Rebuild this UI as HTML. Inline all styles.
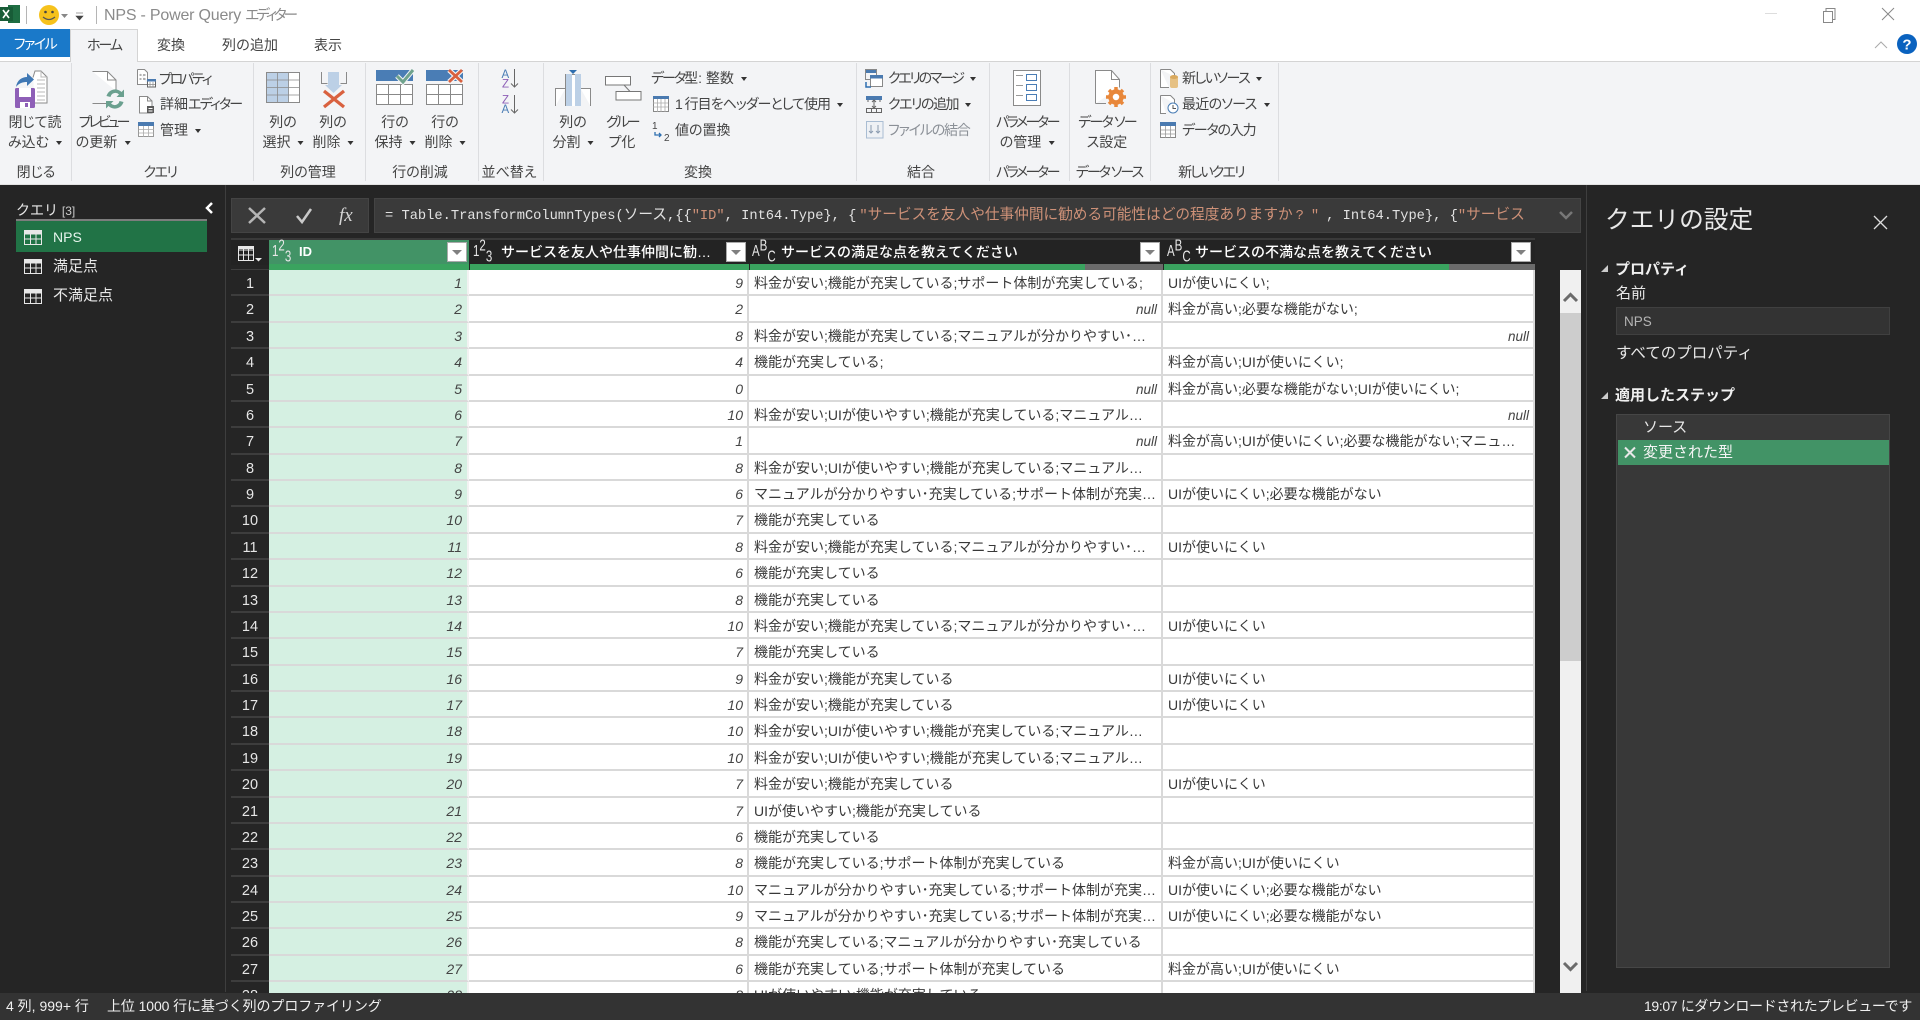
<!DOCTYPE html>
<html lang="ja"><head><meta charset="utf-8"><title>NPS - Power Query エディター</title>
<style>
*{box-sizing:border-box;margin:0;padding:0}
html,body{width:1920px;height:1020px;overflow:hidden;background:#252525}
body{position:relative;font-family:"Liberation Sans","Noto Sans CJK JP",sans-serif;font-size:14px;color:#333}
.b{position:absolute}
.t{position:absolute;white-space:nowrap;line-height:20px;height:20px}
.c{transform:translateX(-50%)}
.a{display:inline-block;width:0;height:0;border-left:3.5px solid transparent;border-right:3.5px solid transparent;border-top:4px solid #333;margin-left:7px;vertical-align:2px;letter-spacing:0}
.g{color:#444;font-size:14px;font-feature-settings:"palt"}
.p{font-feature-settings:"palt"}
.w{color:#e8e8e8}
.sep{position:absolute;top:63px;width:1px;height:118px;background:#dcdde0}
svg{position:absolute;left:0;top:0;overflow:visible}
#grid{position:absolute;left:231px;top:270px;width:1304px;height:723px;overflow:hidden;background:#fff}
.r{position:relative;height:26.38px}
.r span{position:absolute;top:0;height:100%;line-height:27px;white-space:nowrap;overflow:hidden;border-bottom:2px solid #d9d9d9}
.r span:nth-child(1){left:0;width:38px;background:#252525;color:#e6e6e6;text-align:center;font-size:14.5px;line-height:28px;border-bottom:2px solid #3d3d3d}
.r span:nth-child(2){left:38px;width:200px;background:#d5f0e2;text-align:right;font-style:italic;padding-right:5px;color:#444;border-right:2px solid #f2f2f2;font-size:14px}
.r span:nth-child(3){left:238px;width:280px;text-align:right;font-style:italic;padding-right:4px;color:#444;border-right:2px solid #d9d9d9}
.r span:nth-child(4){left:518px;width:414px;padding-left:5px;border-right:2px solid #d9d9d9;color:#383838}
.r span:nth-child(5){left:932px;width:372px;padding-left:5px;color:#383838;border-right:2px solid #d9d9d9}
.r span.nl{text-align:right;font-style:italic;padding-right:4px;color:#444;font-size:13.5px}
#fx{position:absolute;left:385px;top:206px;width:1140px;height:20px;overflow:hidden;white-space:nowrap;font-family:"Liberation Mono","Noto Sans CJK JP",monospace;font-size:13.72px;line-height:20px;color:#e2e2e2}
#fx b{font-weight:400;color:#ce9178;font-size:14.67px}
#fx i{font-style:normal;font-size:14.67px}
#fx em{font-style:normal;color:#ce9178}
#fx em.q{letter-spacing:7px;margin-left:3px}
.h{position:absolute;top:242px;white-space:nowrap;line-height:20px;color:#fff;font-weight:700;font-size:14px}
.fb{position:absolute;top:242px;width:20px;height:20px;background:#fff;border:1px solid #aaa}
.fb:after{content:"";position:absolute;left:4px;top:7px;border-left:5px solid transparent;border-right:5px solid transparent;border-top:5px solid #808080}
.ty{position:absolute;top:240px;height:24px;color:#e8e8e8;line-height:24px;white-space:nowrap;font-size:11.5px;transform:scaleY(1.35);transform-origin:50% 50%}
.ty sup,.ty sub{font-size:11.5px;line-height:0;position:relative;vertical-align:baseline}
.ty sup{top:-4px}.ty sub{top:4px}
</style></head><body>

<!-- title bar + tabs -->
<div class="b" style="left:0;top:0;width:1920px;height:61px;background:#fff"></div>
<div class="b" style="left:0;top:61px;width:1920px;height:124px;background:#f3f4f6;border-top:1px solid #d4d4d4;border-bottom:1px solid #e2e2e2"></div>
<div class="b" style="left:0;top:29px;width:70px;height:28px;background:#1a79c9"></div>
<div class="b" style="left:70px;top:29px;width:68px;height:33px;background:#f3f4f6;border:1px solid #d4d4d4;border-bottom:none"></div>
<div class="t c p" style="left:35px;top:34px;color:#fff;font-size:14px;letter-spacing:-1.5px">ファイル</div>
<div class="t c p" style="left:104px;top:35px;font-size:14px;color:#444;letter-spacing:-2px">ホーム</div>
<div class="t c" style="left:171px;top:35px;font-size:14px;color:#444">変換</div>
<div class="t c" style="left:250px;top:35px;font-size:14px;color:#444">列の追加</div>
<div class="t c" style="left:328px;top:35px;font-size:14px;color:#444">表示</div>
<div class="t p" style="left:104px;top:6px;font-size:16px;color:#8a8a8a;letter-spacing:-.2px">NPS - Power Query <span style="font-size:14.5px;letter-spacing:-3px">エディター</span></div>

<!-- separators -->
<div class="sep" style="left:71px"></div><div class="sep" style="left:253px"></div><div class="sep" style="left:365px"></div><div class="sep" style="left:478px"></div><div class="sep" style="left:543px"></div><div class="sep" style="left:856px"></div><div class="sep" style="left:989px"></div><div class="sep" style="left:1069px"></div><div class="sep" style="left:1150px"></div><div class="sep" style="left:1278px"></div>

<!-- ribbon large button labels -->
<div class="t c g" style="left:35px;top:112px">閉じて読</div><div class="t c g" style="left:35px;top:132px">み込む<i class="a"></i></div>
<div class="t c g" style="left:103px;top:112px;letter-spacing:-3px">プレビュー</div><div class="t c g" style="left:103px;top:132px">の更新<i class="a"></i></div>
<div class="t c g" style="left:283px;top:112px">列の</div><div class="t c g" style="left:283px;top:132px">選択<i class="a"></i></div>
<div class="t c g" style="left:333px;top:112px">列の</div><div class="t c g" style="left:333px;top:132px">削除<i class="a"></i></div>
<div class="t c g" style="left:395px;top:112px">行の</div><div class="t c g" style="left:395px;top:132px">保持<i class="a"></i></div>
<div class="t c g" style="left:445px;top:112px">行の</div><div class="t c g" style="left:445px;top:132px">削除<i class="a"></i></div>
<div class="t c g" style="left:573px;top:112px">列の</div><div class="t c g" style="left:573px;top:132px">分割<i class="a"></i></div>
<div class="t c g" style="left:622px;top:112px;letter-spacing:-2.6px">グルー</div><div class="t c g" style="left:622px;top:132px">プ化</div>
<div class="t c g" style="left:1027px;top:112px;letter-spacing:-2.5px">パラメーター</div><div class="t c g" style="left:1027px;top:132px">の管理<i class="a"></i></div>
<div class="t c g" style="left:1107px;top:112px;letter-spacing:-1.8px">データ ソー</div><div class="t c g" style="left:1107px;top:132px">ス設定</div>

<!-- ribbon small labels -->
<div class="t g" style="left:159px;top:69px;letter-spacing:-2.2px">プロパティ</div>
<div class="t g" style="left:160px;top:94px">詳細<span style="letter-spacing:-1.8px">エディター</span></div>
<div class="t g" style="left:160px;top:120px">管理<i class="a"></i></div>
<div class="t g" style="left:651px;top:68px"><span style="letter-spacing:-2px">データ</span>型: 整数<i class="a"></i></div>
<div class="t g" style="left:675px;top:94px;letter-spacing:-1px">1 行目をヘッダーとして使用<i class="a"></i></div>
<div class="t g" style="left:675px;top:120px">値の置換</div>
<div class="t g" style="left:888px;top:68px;letter-spacing:-2.3px">クエリのマージ<i class="a"></i></div>
<div class="t g" style="left:888px;top:94px;letter-spacing:-1.5px">クエリの追加<i class="a"></i></div>
<div class="t g" style="left:888px;top:120px;color:#8b9097;letter-spacing:-1.2px">ファイルの結合</div>
<div class="t g" style="left:1182px;top:68px;letter-spacing:-1.5px">新しいソース<i class="a"></i></div>
<div class="t g" style="left:1182px;top:94px;letter-spacing:-.7px">最近のソース<i class="a"></i></div>
<div class="t g" style="left:1182px;top:120px;letter-spacing:-1.2px">データの入力</div>

<!-- group labels -->
<div class="t c g" style="left:36px;top:162px">閉じる</div>
<div class="t c g" style="left:160px;top:162px;letter-spacing:-1.5px">クエリ</div>
<div class="t c g" style="left:308px;top:162px">列の管理</div>
<div class="t c g" style="left:420px;top:162px">行の削減</div>
<div class="t c g" style="left:509px;top:162px">並べ替え</div>
<div class="t c g" style="left:698px;top:162px">変換</div>
<div class="t c g" style="left:921px;top:162px">結合</div>
<div class="t c g" style="left:1027px;top:162px;letter-spacing:-2.5px">パラメーター</div>
<div class="t c g" style="left:1109px;top:162px;letter-spacing:-2px">データ ソース</div>
<div class="t c g" style="left:1211px;top:162px;letter-spacing:-1.8px">新しいクエリ</div>

<!-- left panel -->
<div class="b" style="left:225px;top:185px;width:1px;height:807px;background:#3e3e3e"></div>
<div class="t w" style="left:16px;top:200px;font-size:14px">クエリ <span style="font-size:12px;color:#ccc">[3]</span></div>
<div class="b" style="left:16px;top:219px;width:191px;height:2px;background:#7d7d7d"></div>
<div class="b" style="left:16px;top:221px;width:191px;height:31px;background:#217346"></div>
<div class="t" style="left:53px;top:227px;color:#e6f4ec;font-size:14px">NPS</div>
<div class="t w" style="left:53px;top:257px;font-size:15px">満足点</div>
<div class="t w" style="left:53px;top:286px;font-size:15px">不満足点</div>

<!-- formula bar -->
<div class="b" style="left:231px;top:198px;width:138px;height:35px;background:#3a3a3a;border:1px solid #444"></div>
<div class="b" style="left:374px;top:198px;width:1207px;height:35px;background:#3a3a3a;border:1px solid #444"></div>
<div id="fx">= Table.TransformColumnTypes(<i>ソース</i>,{{<em>"ID"</em>, Int64.Type}, {<em style="margin-left:3px">"</em><b>サービスを友人や仕事仲間に勧める可能性はどの程度ありますか</b><em class="q">?"</em>, Int64.Type}, {<em>"</em><b>サービス</b></div>
<div class="t" style="left:339px;top:205px;font-family:'Liberation Serif',serif;font-style:italic;font-size:19px;color:#d6d6d6;line-height:22px">fx</div>

<!-- table header -->
<div class="b" style="left:231px;top:238px;width:1304px;height:27px;background:#232323;border-top:2px solid #3a3a3a"></div>
<div class="b" style="left:269px;top:240px;width:200px;height:24px;background:#429366"></div>
<div class="b" style="left:231px;top:265px;width:38px;height:5px;background:#252525;border-bottom:1px solid #3e3e3e"></div>
<div class="b" style="left:269px;top:264px;width:200px;height:6px;background:#3aa35f"></div>
<div class="b" style="left:470px;top:264px;width:279px;height:6px;background:#3aa35f"></div>
<div class="b" style="left:750px;top:264px;width:335px;height:6px;background:#3aa35f"></div>
<div class="b" style="left:1085px;top:264px;width:78px;height:6px;background:#6b6b6b"></div>
<div class="b" style="left:1164px;top:264px;width:285px;height:6px;background:#3aa35f"></div>
<div class="b" style="left:1449px;top:264px;width:86px;height:6px;background:#6b6b6b"></div>
<div class="ty" style="left:272px">1<sup>2</sup><sub>3</sub></div>
<div class="ty" style="left:473px">1<sup>2</sup><sub>3</sub></div>
<div class="ty" style="left:752px">A<sup>B</sup><sub>C</sub></div>
<div class="ty" style="left:1167px">A<sup>B</sup><sub>C</sub></div>
<div class="h" style="left:299px;font-size:13px">ID</div>
<div class="h" style="left:501px;font-weight:500">サービスを友人や仕事仲間に勧…</div>
<div class="h" style="left:781px;font-weight:500">サービスの満足な点を教えてください</div>
<div class="h" style="left:1195px;font-weight:500">サービスの不満な点を教えてください</div>
<div class="fb" style="left:447px"></div><div class="fb" style="left:726px"></div><div class="fb" style="left:1140px"></div><div class="fb" style="left:1511px"></div>

<!-- grid -->
<div id="grid">
<div class="r"><span>1</span><span>1</span><span>9</span><span>料金が安い;機能が充実している;サポート体制が充実している;</span><span>UIが使いにくい;</span></div>
<div class="r"><span>2</span><span>2</span><span>2</span><span class="nl">null</span><span>料金が高い;必要な機能がない;</span></div>
<div class="r"><span>3</span><span>3</span><span>8</span><span>料金が安い;機能が充実している;マニュアルが分かりやすい･…</span><span class="nl">null</span></div>
<div class="r"><span>4</span><span>4</span><span>4</span><span>機能が充実している;</span><span>料金が高い;UIが使いにくい;</span></div>
<div class="r"><span>5</span><span>5</span><span>0</span><span class="nl">null</span><span>料金が高い;必要な機能がない;UIが使いにくい;</span></div>
<div class="r"><span>6</span><span>6</span><span>10</span><span>料金が安い;UIが使いやすい;機能が充実している;マニュアル…</span><span class="nl">null</span></div>
<div class="r"><span>7</span><span>7</span><span>1</span><span class="nl">null</span><span>料金が高い;UIが使いにくい;必要な機能がない;マニュ…</span></div>
<div class="r"><span>8</span><span>8</span><span>8</span><span>料金が安い;UIが使いやすい;機能が充実している;マニュアル…</span><span></span></div>
<div class="r"><span>9</span><span>9</span><span>6</span><span>マニュアルが分かりやすい･充実している;サポート体制が充実…</span><span>UIが使いにくい;必要な機能がない</span></div>
<div class="r"><span>10</span><span>10</span><span>7</span><span>機能が充実している</span><span></span></div>
<div class="r"><span>11</span><span>11</span><span>8</span><span>料金が安い;機能が充実している;マニュアルが分かりやすい･…</span><span>UIが使いにくい</span></div>
<div class="r"><span>12</span><span>12</span><span>6</span><span>機能が充実している</span><span></span></div>
<div class="r"><span>13</span><span>13</span><span>8</span><span>機能が充実している</span><span></span></div>
<div class="r"><span>14</span><span>14</span><span>10</span><span>料金が安い;機能が充実している;マニュアルが分かりやすい･…</span><span>UIが使いにくい</span></div>
<div class="r"><span>15</span><span>15</span><span>7</span><span>機能が充実している</span><span></span></div>
<div class="r"><span>16</span><span>16</span><span>9</span><span>料金が安い;機能が充実している</span><span>UIが使いにくい</span></div>
<div class="r"><span>17</span><span>17</span><span>10</span><span>料金が安い;機能が充実している</span><span>UIが使いにくい</span></div>
<div class="r"><span>18</span><span>18</span><span>10</span><span>料金が安い;UIが使いやすい;機能が充実している;マニュアル…</span><span></span></div>
<div class="r"><span>19</span><span>19</span><span>10</span><span>料金が安い;UIが使いやすい;機能が充実している;マニュアル…</span><span></span></div>
<div class="r"><span>20</span><span>20</span><span>7</span><span>料金が安い;機能が充実している</span><span>UIが使いにくい</span></div>
<div class="r"><span>21</span><span>21</span><span>7</span><span>UIが使いやすい;機能が充実している</span><span></span></div>
<div class="r"><span>22</span><span>22</span><span>6</span><span>機能が充実している</span><span></span></div>
<div class="r"><span>23</span><span>23</span><span>8</span><span>機能が充実している;サポート体制が充実している</span><span>料金が高い;UIが使いにくい</span></div>
<div class="r"><span>24</span><span>24</span><span>10</span><span>マニュアルが分かりやすい･充実している;サポート体制が充実…</span><span>UIが使いにくい;必要な機能がない</span></div>
<div class="r"><span>25</span><span>25</span><span>9</span><span>マニュアルが分かりやすい･充実している;サポート体制が充実…</span><span>UIが使いにくい;必要な機能がない</span></div>
<div class="r"><span>26</span><span>26</span><span>8</span><span>機能が充実している;マニュアルが分かりやすい･充実している</span><span></span></div>
<div class="r"><span>27</span><span>27</span><span>6</span><span>機能が充実している;サポート体制が充実している</span><span>料金が高い;UIが使いにくい</span></div>
<div class="r"><span>28</span><span>28</span><span>8</span><span>UIが使いやすい;機能が充実している</span><span></span></div>
</div>

<!-- scrollbar -->
<div class="b" style="left:1560px;top:270px;width:21px;height:723px;background:#f0f0f0"></div>
<div class="b" style="left:1560px;top:313px;width:21px;height:348px;background:#cdcdcd"></div>

<!-- right panel -->
<div class="b" style="left:1586px;top:185px;width:1px;height:806px;background:#3e3e3e"></div>
<div class="t" style="left:1605px;top:205px;font-size:24.7px;color:#e8e8e8;line-height:32px;height:32px">クエリの設定</div>
<div class="t" style="left:1615px;top:260px;font-size:15px;font-weight:700;color:#f0f0f0">プロパティ</div>
<div class="t w" style="left:1616px;top:284px;font-size:15px">名前</div>
<div class="b" style="left:1616px;top:307px;width:274px;height:28px;background:#333;border:1px solid #404040"></div>
<div class="t" style="left:1624px;top:312px;color:#b5b5b5;font-size:13.5px">NPS</div>
<div class="t w" style="left:1616px;top:344px;font-size:15.5px">すべてのプロパティ</div>
<div class="t" style="left:1615px;top:386px;font-size:15px;font-weight:700;color:#f0f0f0">適用したステップ</div>
<div class="b" style="left:1616px;top:414px;width:274px;height:554px;background:#383838;border:1px solid #464646"></div>
<div class="b" style="left:1618px;top:440px;width:271px;height:25px;background:#429366"></div>
<div class="t w" style="left:1643px;top:418px;font-size:15px">ソース</div>
<div class="t" style="left:1643px;top:443px;color:#f4f4f4;font-size:15px">変更された型</div>

<!-- status bar -->
<div class="b" style="left:0;top:993px;width:1920px;height:27px;background:#333"></div>
<div class="t" style="left:6px;top:996px;color:#f0f0f0">4 列, 999+ 行</div>
<div class="t" style="left:107px;top:996px;color:#f0f0f0;letter-spacing:-.1px">上位 1000 行に基づく列のプロファイリング</div>
<div class="t" style="right:8px;top:996px;color:#f0f0f0;letter-spacing:-.35px">19:07 にダウンロードされたプレビューです</div>

<!-- icons -->
<svg width="1920" height="1020" viewBox="0 0 1920 1020" fill="none">
<!-- excel -->
<rect x="8" y="5" width="12" height="18" fill="#1f6e43"/><rect x="0" y="7" width="13" height="14" fill="#185c37"/>
<path d="M3 10l6 8M9 10l-6 8" stroke="#fff" stroke-width="1.6"/>
<path d="M26.5 6v18M96.5 6v18" stroke="#b5b5b5"/>
<circle cx="49" cy="15" r="10" fill="#f6c21c"/><circle cx="45.500" cy="12" r="1.300" fill="#444"/><circle cx="52.500" cy="12" r="1.300" fill="#444"/><path d="M43 17q6 5 12 0" stroke="#555" stroke-width="1.200"/>
<path d="M61 14h7l-3.500 4z" fill="#888"/><path d="M76 13h7M76 16h7l-3.500 4z" fill="#444" stroke="#444" stroke-width=".6"/>
<!-- window controls -->
<path d="M1765 13.500h12" stroke="#ddd"/>
<path d="M1823.500 11.500h9v11h-9zM1826 11v-2.500h9v11h-2.500" stroke="#888" stroke-width="1"/>
<path d="M1882 8l12 12M1894 8l-12 12" stroke="#888"/>
<path d="M1875 48l6-6 6 6" stroke="#aaa"/>
<circle cx="1907" cy="44" r="10" fill="#0a62bf"/>
<text x="1907" y="49.500" text-anchor="middle" font-size="15" font-weight="700" fill="#fff" font-family="Liberation Sans,sans-serif">?</text>
<!-- close & load -->
<path d="M33 77.500l2-6.500h6l6 6v26H35" stroke="#8a8a8a" fill="#fff"/><path d="M41 71v6h6M37 80h8M37 84h8M37 88h8M37 92h8M37 96h8M37 100h8" stroke="#b8b8b8"/>
<path d="M16 87c1-7 6-10 11-10v-4l7 6.500-7 6.500v-4c-4 0-8 1-11 5z" fill="#3f78b4"/>
<rect x="15" y="88" width="20" height="20" rx="1.500" fill="#8e5fb7"/><rect x="19" y="88" width="12" height="9" fill="#fff"/><rect x="20" y="102" width="10" height="6" fill="#fff"/><rect x="25" y="103" width="3" height="4" fill="#8e5fb7"/>
<!-- preview -->
<path d="M92.500 71.500h15l8.500 8.500v11M107 103.500H92.500z" stroke="#8a8a8a" fill="#fff"/><path d="M107.500 71.500v8.500h8.500" stroke="#8a8a8a"/>
<path d="M106.500 96a9 9 0 0 1 15-4l2.500-2.500V97h-7.500l2.500-2.500a5 5 0 0 0-8.500 2.500zM123.500 102a9 9 0 0 1-15 4l-2.500 2.500V101h7.500l-2.500 2.500a5 5 0 0 0 8.500-2.500z" fill="#6aa08f"/>
<!-- properties -->
<path d="M137.500 69.500h7l3 3v8M147 84.500h-9.500v-15" stroke="#8a8a8a" fill="#fff"/><path d="M139.500 75h2M143 75h2.500M139.500 79h2M143 79h2.500" stroke="#666"/>
<rect x="147.500" y="80.500" width="8" height="6.500" fill="#fff" stroke="#666"/><rect x="147" y="79" width="9" height="2.500" fill="#4a7ab0"/><path d="M150 82v5M153 82v5M148 84.500h7" stroke="#888" stroke-width=".7"/>
<!-- advanced editor -->
<path d="M139.500 96.500h8l4.500 4.500v12h-12.500z" stroke="#8a8a8a" fill="#fff"/><path d="M147.500 96.500v4.500h4.500" stroke="#8a8a8a"/><rect x="147" y="106" width="7" height="7" fill="#5a5a5a"/><path d="M148.500 108.500h4M148.500 111h4" stroke="#fff"/>
<!-- manage -->
<rect x="138.500" y="122.500" width="15" height="14" fill="#fff" stroke="#999"/><rect x="138" y="122" width="16" height="4" fill="#4a7ab0"/><path d="M143.500 126v11M148.500 126v11M139 129.500h15M139 133h15" stroke="#aaa" stroke-width=".8"/>
<!-- choose cols -->
<rect x="266.500" y="72.500" width="33" height="30" fill="#fff" stroke="#8a8a8a"/><rect x="267" y="73" width="22" height="29" fill="#bcd0e6"/><path d="M277.500 73v29M288.500 73v29M267 80h32M267 87.500h32M267 95h32" stroke="#8a8a8a" stroke-width=".8"/>
<!-- remove cols -->
<path d="M321.500 72v11.500h6M346.500 72v11.500h-6" stroke="#8a8a8a"/><rect x="328" y="72" width="11" height="15" fill="#bcd0e6"/>
<path d="M325 85h17l-8.500 8z" fill="#bcd0e6"/><path d="M324 91l20 16M344 91l-20 16" stroke="#d9613f" stroke-width="3.300"/>
<!-- keep rows -->
<rect x="376" y="70" width="37" height="11" fill="#4a7db5"/><rect x="376.500" y="84.500" width="36" height="20" fill="#fff" stroke="#888"/><path d="M388.500 85v20M400.500 85v20M377 94.500h36" stroke="#888"/>
<path d="M397 76l6 6 10-12" stroke="#f3f4f6" stroke-width="5"/><path d="M397 76l6 6 10-12" stroke="#6fa38d" stroke-width="3"/>
<!-- remove rows -->
<rect x="426" y="70" width="37" height="11" fill="#4a7db5"/><rect x="426.500" y="84.500" width="36" height="20" fill="#fff" stroke="#888"/><path d="M438.500 85v20M450.500 85v20M427 94.500h36" stroke="#888"/>
<path d="M449 70l13 12M462 70l-13 12" stroke="#f3f4f6" stroke-width="5"/><path d="M449 70l13 12M462 70l-13 12" stroke="#d9613f" stroke-width="2.800"/>
<!-- sort -->
<text x="501.500" y="78" font-size="11.500" fill="#4a7db5" font-family="Liberation Sans,sans-serif">A</text><text x="502" y="87.500" font-size="11.500" fill="#8e5fb7" font-family="Liberation Sans,sans-serif">Z</text><path d="M514.500 69v18M511 83.500l3.500 3.500 3.500-3.500" stroke="#666"/>
<text x="502" y="103.500" font-size="11.500" fill="#8e5fb7" font-family="Liberation Sans,sans-serif">Z</text><text x="501.500" y="113" font-size="11.500" fill="#4a7db5" font-family="Liberation Sans,sans-serif">A</text><path d="M514.500 95v18M511 109.500l3.500 3.500 3.500-3.500" stroke="#666"/>
<!-- split -->
<path d="M555.500 106V88.500h10M590.500 106V88.500h-10" stroke="#8a8a8a" fill="#fff"/><rect x="565" y="74" width="16" height="32" fill="#fff"/><path d="M565.500 106V74.500h15V106" stroke="#8a8a8a"/><rect x="566" y="74" width="6" height="32" fill="#bcd0e6"/><rect x="575" y="74" width="6" height="32" fill="#bcd0e6"/><path d="M569 70h8l-4 4z" fill="#2e6fb0"/>
<!-- group -->
<rect x="605.500" y="76.500" width="25" height="8.500" fill="#fff" stroke="#777"/><rect x="616" y="91.500" width="25" height="8.500" fill="#fff" stroke="#777"/><path d="M624 85l6 6.500" stroke="#777"/>
<!-- first row -->
<rect x="653.500" y="96.500" width="15" height="15" fill="#fff" stroke="#888"/><rect x="653" y="96" width="16" height="3" fill="#4a7ab0"/><path d="M657.500 99v13M661 99v13M665 99v13M653 103h15M653 107h15" stroke="#aaa" stroke-width=".8"/>
<!-- replace -->
<text x="652" y="129" font-size="10" fill="#444" font-family="Liberation Sans,sans-serif">1</text><text x="664" y="141" font-size="10" fill="#444" font-family="Liberation Sans,sans-serif">2</text><path d="M655 132v3h6M659 133l2 2-2 2" stroke="#2e6fb0" stroke-width="1.300"/>
<!-- merge -->
<rect x="865" y="69" width="12" height="4" fill="#4a7ab0"/><rect x="865.500" y="69.500" width="11" height="10" stroke="#888"/><rect x="870.500" y="75.500" width="12" height="11" fill="#fff" stroke="#888"/><rect x="870" y="75" width="13" height="3.500" fill="#4a7ab0"/><path d="M866 82v5h5" stroke="#2e6fb0" stroke-width="1.500"/>
<!-- append -->
<rect x="866" y="96" width="16" height="4" fill="#4a7ab0"/><path d="M868 100v2M880 100v2M866.500 108.500h15v4h-15zM871.500 108.500v4M876.500 108.500v4M874 100v8M872 102l2-2 2 2M872 106l2 2 2-2" stroke="#666"/>
<!-- combine -->
<rect x="866.500" y="121.500" width="16.500" height="16.500" stroke="#a9bdd3" fill="#eef1f5"/><path d="M871 125v8M869 131l2 2 2-2M878 125v8M876 131l2 2 2-2" stroke="#8a9bb0"/>
<!-- parameters -->
<rect x="1013.500" y="70.500" width="27" height="35" fill="#fff" stroke="#8a8a8a"/><path d="M1016 75.500h7M1016 85.500h7M1016 95.500h7" stroke="#999"/><rect x="1026.500" y="74.500" width="10" height="6" stroke="#4a7db5"/><rect x="1026.500" y="84.500" width="10" height="6" stroke="#4a7db5"/><rect x="1026.500" y="94.500" width="10" height="6" stroke="#4a7db5"/>
<!-- data source settings -->
<path d="M1095.500 103.500V70.500h16l8 9v8M1106 103.500h-10.500" stroke="#8a8a8a" fill="#fff"/><path d="M1111.500 70.500v9h8" stroke="#8a8a8a"/>
<circle cx="1116" cy="97" r="5.500" stroke="#e8873a" stroke-width="4.500" fill="#fff"/><path d="M1116 87v4M1116 103v4M1106 97h4M1122 97h4M1109 90l2.500 2.500M1120.500 101.500l2.500 2.500M1123 90l-2.500 2.500M1111.500 101.500l-2.500 2.500" stroke="#e8873a" stroke-width="3.500"/>
<!-- new source -->
<path d="M1160.500 69.500h10l4 4v3M1169 87.500h-8.500v-18" stroke="#888" fill="#fff"/><rect x="1170" y="76" width="8" height="12" rx="2" fill="#e6c184"/><ellipse cx="1174" cy="77" rx="4" ry="2" fill="#d9a95e"/>
<!-- recent -->
<path d="M1160.500 95.500h10l4 4v4M1166 113.500h-5.500v-18" stroke="#888" fill="#fff"/><circle cx="1173" cy="108" r="5" fill="#fff" stroke="#4a7db5"/><path d="M1173 105v3.500h3" stroke="#555"/>
<!-- enter data -->
<rect x="1160.500" y="122.500" width="15" height="15" fill="#fff" stroke="#888"/><rect x="1160" y="122" width="16" height="4" fill="#4a7ab0"/><path d="M1165.500 126v12M1170.500 126v12M1161 130h15M1161 134h15" stroke="#999" stroke-width=".8"/>
<!-- panel icons -->
<path d="M212 203l-5 5 5 5" stroke="#fff" stroke-width="2.500"/>
<g stroke="#e8e8e8" fill="none"><rect x="24.500" y="230.500" width="17" height="14"/><path d="M24.500 234h17M24.500 239h17M30.500 231v14M36 231v14"/></g>
<rect x="24" y="230" width="18" height="3.500" fill="#e8e8e8"/>
<g stroke="#e8e8e8" fill="none"><rect x="24.500" y="259.500" width="17" height="14"/><path d="M24.500 263h17M24.500 268h17M30.500 260v14M36 260v14"/></g>
<rect x="24" y="259" width="18" height="3.500" fill="#e8e8e8"/>
<g stroke="#e8e8e8" fill="none"><rect x="24.500" y="289.500" width="17" height="14"/><path d="M24.500 293h17M24.500 298h17M30.500 290v14M36 290v14"/></g>
<rect x="24" y="289" width="18" height="3.500" fill="#e8e8e8"/>
<!-- formula -->
<path d="M249 208l16 15M265 208l-16 15" stroke="#b5b5b5" stroke-width="2.500"/>
<path d="M297 216l5 6 9-13" stroke="#c9c9c9" stroke-width="2.500"/>
<path d="M1560 212l6 6 6-6" stroke="#777" stroke-width="2.500"/>
<!-- grid corner -->
<g stroke="#e8e8e8"><rect x="238.500" y="246.500" width="15" height="14"/><path d="M238.500 250h15M238.500 255h15M243.500 247v14M248.500 247v14"/></g><rect x="238" y="246" width="16" height="3" fill="#e8e8e8"/><path d="M255 258h7l-3.500 3.500z" fill="#e8e8e8"/>
<!-- scrollbar arrows -->
<path d="M1564 301l6.500-6.500 6.500 6.500" stroke="#6b6b6b" stroke-width="3"/>
<path d="M1564 963l6.500 6.500 6.500-6.500" stroke="#6b6b6b" stroke-width="3"/>
<!-- right panel -->
<path d="M1874 216l13 13M1887 216l-13 13" stroke="#ddd" stroke-width="1.300"/>
<path d="M1601 272l7-7v7z" fill="#ccc"/><path d="M1601 399l7-7v7z" fill="#ccc"/>
<path d="M1625 447.500l10 10M1635 447.500l-10 10" stroke="#e8e8e8" stroke-width="2"/>
</svg>
</body></html>
